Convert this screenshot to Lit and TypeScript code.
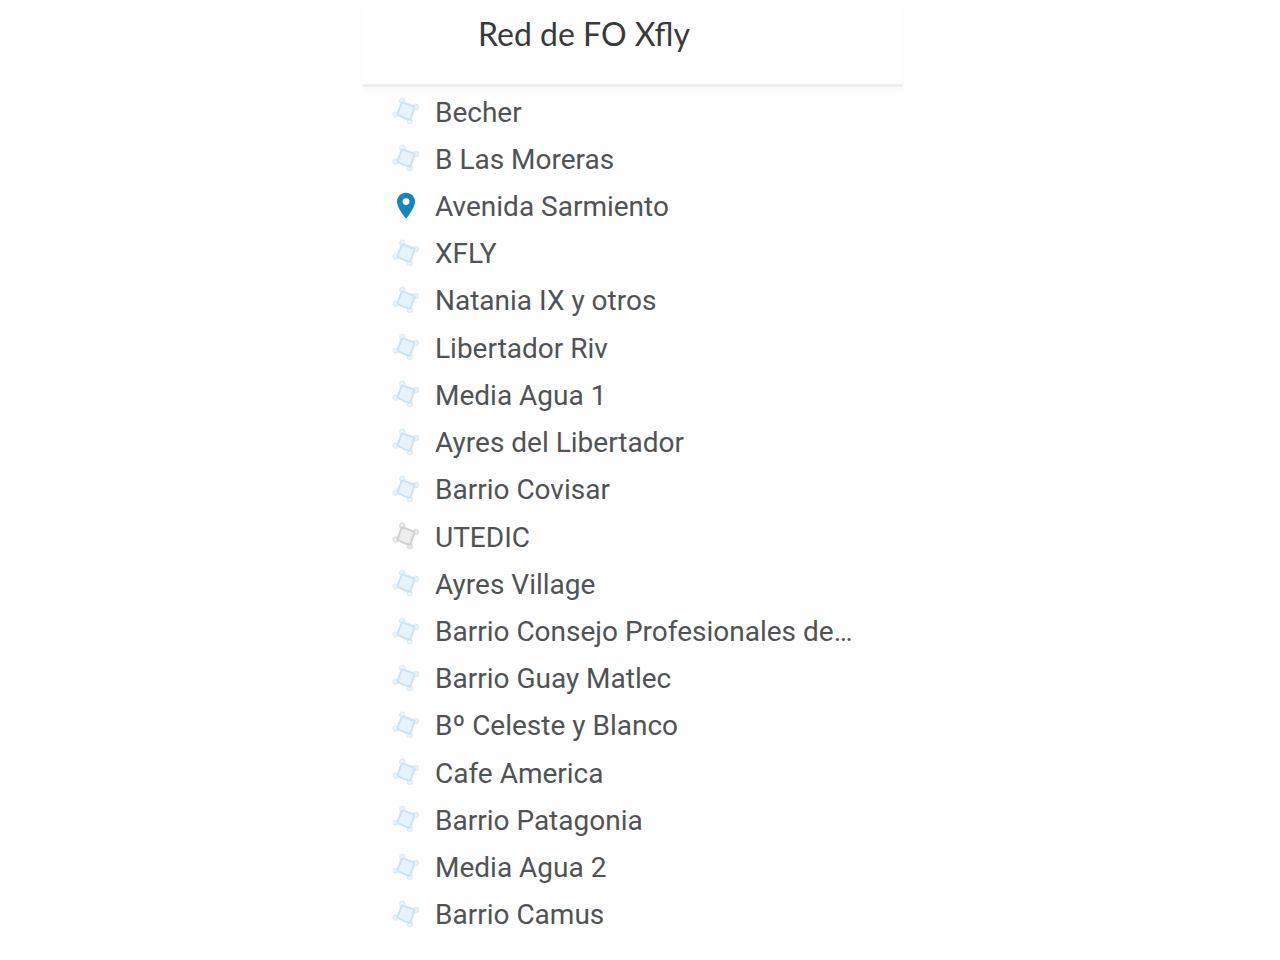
import { LitElement, html, css } from "lit";
import { customElement, property } from "lit/decorators.js";

type Kind = "area" | "muted" | "pin";

interface Place {
  name: string;
  kind: Kind;
}

const PLACES: Place[] = [
  { name: "Becher", kind: "area" },
  { name: "B Las Moreras", kind: "area" },
  { name: "Avenida Sarmiento", kind: "pin" },
  { name: "XFLY", kind: "area" },
  { name: "Natania IX y otros", kind: "area" },
  { name: "Libertador Riv", kind: "area" },
  { name: "Media Agua 1", kind: "area" },
  { name: "Ayres del Libertador", kind: "area" },
  { name: "Barrio Covisar", kind: "area" },
  { name: "UTEDIC", kind: "muted" },
  { name: "Ayres Village", kind: "area" },
  { name: "Barrio Consejo Profesionales de…", kind: "area" },
  { name: "Barrio Guay Matlec", kind: "area" },
  { name: "Bº Celeste y Blanco", kind: "area" },
  { name: "Cafe America", kind: "area" },
  { name: "Barrio Patagonia", kind: "area" },
  { name: "Media Agua 2", kind: "area" },
  { name: "Barrio Camus", kind: "area" },
];

@customElement("place-icon")
export class PlaceIcon extends LitElement {
  @property() kind: Kind = "area";

  static styles = css`
    :host {
      display: block;
      flex: none;
      width: 28px;
      height: 28px;
    }
    svg {
      display: block;
    }
    .area {
      fill: #e6f3fb;
      stroke: #cae3f1;
    }
    .area .node {
      fill: #eaf4fa;
      stroke: #deedf6;
    }
    .muted {
      fill: #ededed;
      stroke: #cfcfcf;
    }
    .muted .node {
      fill: #ededed;
      stroke: #dedede;
    }
    .pin {
      fill: #1486bd;
    }
    .hole {
      fill: #ffffff;
    }
  `;

  render() {
    if (this.kind === "pin") {
      return html`<svg width="28" height="28" viewBox="0 0 28 28" aria-hidden="true">
        <path class="pin" d="M14 0.8C8.9 0.8 5 4.7 5 9.7C5 16.3 14 26.6 14 26.6S23 16.3 23 9.7C23 4.7 19.1 0.8 14 0.8Z" />
        <circle class="hole" cx="14" cy="9.6" r="3.4" />
      </svg>`;
    }
    return html`<svg width="28" height="28" viewBox="0 0 28 28" aria-hidden="true">
      <g class=${this.kind} stroke-linejoin="round">
        <g class="node" stroke-width="1.4">
          <circle cx="10.2" cy="3.8" r="2.5" />
          <circle cx="23.8" cy="10" r="2.5" />
          <circle cx="17.8" cy="24" r="2.5" />
          <circle cx="3.6" cy="17.6" r="2.5" />
        </g>
        <path stroke-width="2" d="M10 5.4L14.6 6.8L22.4 9.8L21.2 14.6L18 22.8L12.8 21.4L5.4 17.6L7 12.6Z" />
      </g>
    </svg>`;
  }
}

@customElement("app-root")
export class AppRoot extends LitElement {
  static styles = css`
    :host {
      display: flex;
      justify-content: center;
      box-sizing: border-box;
      min-height: 100vh;
      padding-right: 14px;
      background: #fefefe;
      font-family: Roboto, "Liberation Sans", sans-serif;
    }
    .panel {
      display: flex;
      flex-direction: column;
      width: 100%;
      max-width: 540px;
    }
    .header {
      padding: 14px 16px 30px 115px;
      border-bottom: 3px solid #ededed;
      box-shadow: 0 4px 4px #fafafa;
    }
    .title {
      margin: 0;
      font-family: Lato, Roboto, sans-serif;
      font-size: 32px;
      line-height: 40px;
      font-weight: 400;
      color: #38393b;
    }
    .list {
      flex: 1;
      display: grid;
      grid-auto-rows: 1fr;
      margin: 0;
      padding: 2px 16px 21px 29px;
      list-style: none;
    }
    .row {
      display: flex;
      align-items: center;
      gap: 15px;
      min-width: 0;
    }
    .icon {
      margin-bottom: 3px;
    }
    .name {
      overflow: hidden;
      text-overflow: ellipsis;
      white-space: nowrap;
      font-size: 28px;
      line-height: 36px;
      color: #505356;
    }
  `;

  render() {
    return html`
      <main class="panel">
        <header class="header"><h1 class="title">Red de FO Xfly</h1></header>
        <ul class="list">
          ${PLACES.map(
            (p) => html`<li class="row">
              <place-icon class="icon" .kind=${p.kind}></place-icon>
              <span class="name">${p.name}</span>
            </li>`
          )}
        </ul>
      </main>
    `;
  }
}
